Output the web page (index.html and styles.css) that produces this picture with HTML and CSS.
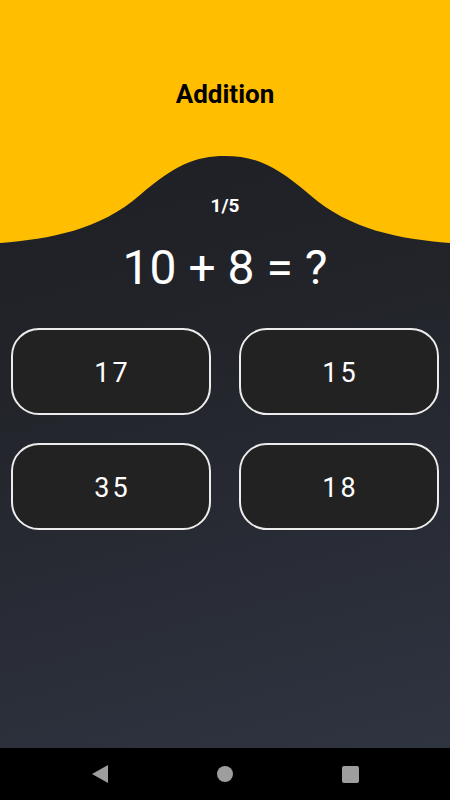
FILE: index.html
```html
<!DOCTYPE html>
<html lang="en">
<head>
<meta charset="utf-8">
<title>Addition</title>
<link rel="stylesheet" href="styles.css">
</head>
<body>
<div class="app">
  <main class="screen">
    <header class="header">
      <svg class="wave" viewBox="0 0 450 243" preserveAspectRatio="none" aria-hidden="true">
        <path d="M0 0 H450 V243 C400 239 350 230 310 195 C275 165 255 156 225 156 C195 156 175 165 140 195 C100 230 50 239 0 243 Z" fill="#ffbf00"/>
      </svg>
      <h1 class="title">Addition</h1>
      <div class="counter">1/5</div>
    </header>
    <div class="question">10 + 8 = ?</div>
    <div class="answers">
      <button class="answer">17</button>
      <button class="answer">15</button>
      <button class="answer">35</button>
      <button class="answer">18</button>
    </div>
  </main>
  <nav class="navbar">
    <svg class="nav-icon" width="16" height="18" viewBox="0 0 16 18" aria-hidden="true"><path d="M16 0 V18 L0 9 Z" fill="#9e9e9e"/></svg>
    <span class="nav-home"></span>
    <span class="nav-recent"></span>
  </nav>
</div>
</body>
</html>
```
FILE: styles.css
```css
* { box-sizing: border-box; }
html, body { margin: 0; padding: 0; }
body {
  font-family: Roboto, "Noto Sans", sans-serif;
  background: #000;
}
.app {
  width: 450px;
  height: 800px;
  display: flex;
  flex-direction: column;
}
.screen {
  flex: 1;
  background: linear-gradient(165deg, #1c1d21 0%, #22242a 45%, #2f3441 100%);
  display: flex;
  flex-direction: column;
  overflow: hidden;
}
.header {
  position: relative;
  height: 243px;
  padding-top: 79px;
  display: flex;
  flex-direction: column;
  align-items: center;
}
.wave {
  position: absolute;
  left: 0;
  top: 0;
  width: 450px;
  height: 243px;
  display: block;
}
.title {
  position: relative;
  margin: 0;
  font-size: 26px;
  line-height: 30px;
  font-weight: 700;
  color: #000;
}
.counter {
  position: relative;
  margin-top: 86px;
  font-size: 19px;
  line-height: 22px;
  font-weight: 700;
  color: #fff;
}
.question {
  text-align: center;
  font-size: 48px;
  line-height: 50px;
  color: #fff;
}
.answers {
  margin-top: 35px;
  padding: 0 11px;
  display: grid;
  grid-template-columns: 1fr 1fr;
  column-gap: 28px;
  row-gap: 28px;
}
.answer {
  height: 87px;
  background: #222222;
  border: 2px solid #ececec;
  border-radius: 28px;
  color: #fff;
  font-family: Roboto, "Noto Sans", sans-serif;
  font-size: 27px;
  letter-spacing: 3px;
  padding: 2px 0 0 3px;
  display: flex;
  align-items: center;
  justify-content: center;
}
.navbar {
  height: 52px;
  background: #000;
  display: flex;
  align-items: center;
  justify-content: center;
  gap: 109px;
}
.nav-icon { display: block; }
.nav-home {
  width: 16px;
  height: 16px;
  border-radius: 50%;
  background: #9e9e9e;
}
.nav-recent {
  width: 17px;
  height: 17px;
  border-radius: 2px;
  background: #9e9e9e;
}
```
